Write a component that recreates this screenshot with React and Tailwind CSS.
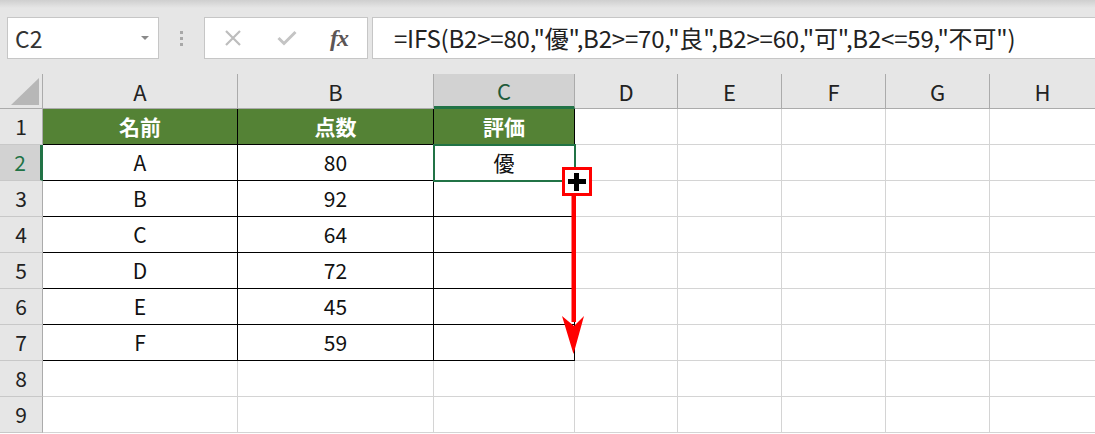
import React from "react";

const F = { fontFamily: '"Noto Sans CJK JP", "Noto Sans", sans-serif' };

const data = [
  ["A", "80", "優"],
  ["B", "92", ""],
  ["C", "64", ""],
  ["D", "72", ""],
  ["E", "45", ""],
  ["F", "59", ""],
];

function Toolbar() {
  return (
    <div className="h-[74px] bg-[#e6e6e6] relative">
      <div className="h-[8px] bg-gradient-to-b from-[#cfcfcf] to-[#e6e6e6]" />
      <div className="flex items-stretch h-[42px] mt-[9px]">
        <div className="ml-[7px] w-[152px] bg-white border border-[#c6c6c6] flex items-center justify-between pl-[7px] pr-[9px]">
          <span className="text-[23px] text-[#333] leading-none" style={F}>C2</span>
          <svg width="8" height="5" viewBox="0 0 8 5"><path d="M0 0 L8 0 L4 4 Z" fill="#8a8a8a" /></svg>
        </div>
        <div className="w-[45px] flex flex-col items-center justify-center gap-[3px]">
          <div className="w-[3px] h-[3px] bg-[#a8a8a8]" />
          <div className="w-[3px] h-[3px] bg-[#a8a8a8]" />
          <div className="w-[3px] h-[3px] bg-[#a8a8a8]" />
        </div>
        <div className="w-[164px] bg-white border border-[#c6c6c6] flex items-center">
          <div className="w-[56px] flex justify-center">
            <svg width="18" height="18" viewBox="0 0 18 18"><path d="M2 2 L16 16 M16 2 L2 16" stroke="#bdbdbd" strokeWidth="2.2" /></svg>
          </div>
          <div className="w-[52px] flex justify-center">
            <svg width="20" height="16" viewBox="0 0 20 16"><path d="M1.5 8 L7 13.5 L18.5 2" stroke="#c4c4c4" strokeWidth="3" fill="none" /></svg>
          </div>
          <div className="w-[52px] flex justify-center">
            <span className="italic font-bold text-[24px] text-[#5b5555] leading-none tracking-[-1px]" style={{ fontFamily: '"Liberation Serif", serif' }}>fx</span>
          </div>
        </div>
        <div className="ml-[4px] flex-1 bg-white border border-[#c6c6c6] border-r-0 flex items-center pl-[21px]">
          <span className="text-[24px] text-[#222] leading-none tracking-[-0.2px]" style={F}>
            =IFS(B2&gt;=80,"優",B2&gt;=70,"良",B2&gt;=60,"可",B2&lt;=59,"不可")
          </span>
        </div>
      </div>
    </div>
  );
}

function Sheet() {
  const colW = ["w-[43px]", "w-[195px]", "w-[196px]", "w-[141px]", "w-[103px]", "w-[104px]", "w-[104px]", "w-[104px]", "w-[105px]"];
  return (
    <div className="relative" style={F}>
      <div className="flex h-[35px] bg-[#e6e6e6]">
        <div className="w-[43px] shrink-0 border-r border-b border-[#ababab] relative">
          <svg className="absolute left-[11px] top-[4px]" width="29" height="28" viewBox="0 0 29 28"><path d="M28 0 L28 27 L0 27 Z" fill="#b7b7b7" /></svg>
        </div>
        <div className="w-[195px] shrink-0 border-r border-b border-[#ababab] flex items-center justify-center text-[22px] text-[#222]">A</div>
        <div className="w-[196px] shrink-0 border-r border-b border-[#ababab] flex items-center justify-center text-[22px] text-[#222]">B</div>
        <div className="w-[141px] shrink-0 border-r border-[#ababab] border-b-[3px] border-b-[#217346] bg-[#d2d2d2] flex items-center justify-center text-[22px] text-[#1e5a3a]">C</div>
        <div className="w-[103px] shrink-0 border-r border-b border-[#ababab] flex items-center justify-center text-[22px] text-[#222]">D</div>
        <div className="w-[104px] shrink-0 border-r border-b border-[#ababab] flex items-center justify-center text-[22px] text-[#222]">E</div>
        <div className="w-[104px] shrink-0 border-r border-b border-[#ababab] flex items-center justify-center text-[22px] text-[#222]">F</div>
        <div className="w-[104px] shrink-0 border-r border-b border-[#ababab] flex items-center justify-center text-[22px] text-[#222]">G</div>
        <div className="w-[105px] shrink-0 border-b border-[#ababab] flex items-center justify-center text-[22px] text-[#222]">H</div>
      </div>
      {Array.from({ length: 9 }).map((_, r) => {
        const n = r + 1;
        const sel = n === 2;
        const inTable = n <= 7;
        const isHead = n === 1;
        const vals = isHead ? ["名前", "点数", "評価"] : inTable ? data[n - 2] : ["", "", ""];
        return (
          <div key={n} className="flex h-[36px] bg-white">
            <div className={"w-[43px] shrink-0 border-b border-[#c8c8c8] flex items-center justify-center text-[21px] " + (sel ? "bg-[#d2d2d2] text-[#217346] border-r-[3px] border-r-[#217346]" : "bg-[#e6e6e6] text-[#222] border-r border-r-[#ababab]")}>{n}</div>
            {[0, 1, 2].map((c) => (
              <div
                key={c}
                className={
                  colW[c + 1] +
                  " shrink-0 flex items-center justify-center " +
                  (isHead
                    ? "bg-[#548235] text-white font-bold text-[21px] border-r border-b border-black"
                    : inTable
                    ? "text-[21px] text-[#111] border-r border-b border-black"
                    : "border-r border-b border-[#d4d4d4]")
                }
              >
                {vals[c]}
              </div>
            ))}
            {[3, 4, 5, 6, 7].map((c) => (
              <div key={c} className={colW[c + 1] + " shrink-0 border-b border-[#d4d4d4] " + (c < 7 ? "border-r" : "")} />
            ))}
          </div>
        );
      })}
      <div className="absolute left-[433px] top-[70px] w-[143px] h-[38px] border-2 border-[#217346]" />
      <div className="absolute left-[562px] top-[93px] w-[30px] h-[29px] border-[3px] border-[#ff0000] bg-white">
        <div className="absolute left-[3px] top-[9px] w-[18px] h-[5px] bg-black" />
        <div className="absolute left-[9px] top-[3px] w-[5px] h-[18px] bg-black" />
      </div>
      <svg className="absolute left-[558px] top-[122px]" width="32" height="162" viewBox="0 0 32 162">
        <rect x="13.5" y="0" width="4.5" height="126" fill="#ff0000" />
        <path d="M4 120 L16 130 L26 120 L15.5 158 Z" fill="#ff0000" />
      </svg>
    </div>
  );
}

export default function App() {
  return (
    <div className="w-[1095px] h-[434px] overflow-hidden bg-white">
      <Toolbar />
      <Sheet />
    </div>
  );
}
